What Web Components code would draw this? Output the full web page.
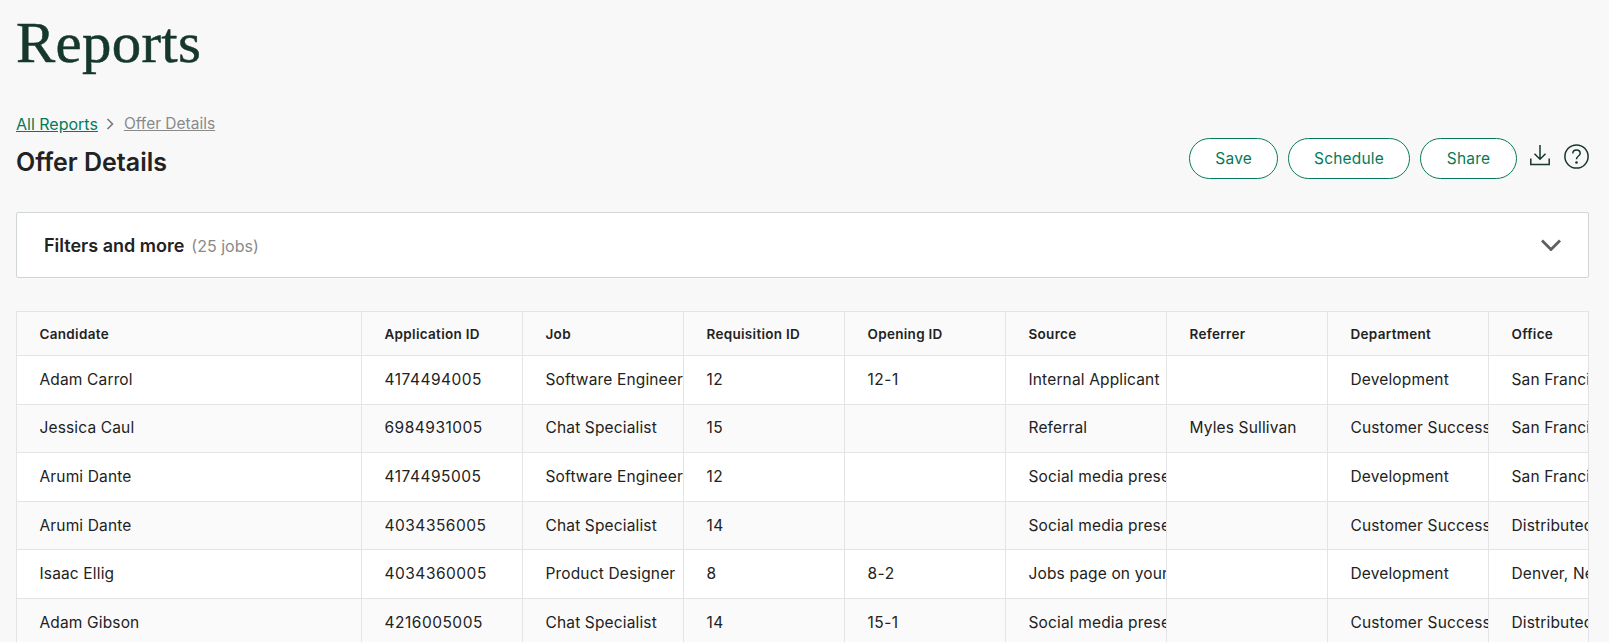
<!DOCTYPE html>
<html><head><meta charset="utf-8"><title>Reports</title>
<style>
html,body{margin:0;padding:0;background:#f8f8f8;overflow:hidden;height:642px}
body{font-family:Inter,"Liberation Sans",sans-serif;color:#222}
</style></head><body>
<report-page>
  <page-title slot="title">Reports</page-title>
  <report-bar slot="bar">
    <crumb-trail slot="crumbs" current="Offer Details"><a href="#">All Reports</a></crumb-trail>
    <span slot="name">Offer Details</span>
    <pill-button slot="actions">Save</pill-button>
    <pill-button slot="actions">Schedule</pill-button>
    <pill-button slot="actions" style="--pad:25.75px">Share</pill-button>
    <icon-download slot="actions"></icon-download>
    <icon-help slot="actions"></icon-help>
  </report-bar>
  <filter-panel slot="filters" note="(25 jobs)">Filters and more</filter-panel>
  <data-table slot="table"></data-table>
</report-page>
<script>
function shadow(el,html){el.attachShadow({mode:'open'}).innerHTML=html}
customElements.define('report-page',class extends HTMLElement{constructor(){super();shadow(this,`<style>
:host{display:flex;flex-direction:column;padding:0 20px 0 16px;height:642px;box-sizing:border-box;overflow:hidden}
.t{margin-top:13px}.b{margin-top:41px}.f{margin-top:35px}.d{margin-top:33px}
</style><div class="t"><slot name="title"></slot></div><div class="b"><slot name="bar"></slot></div><div class="f"><slot name="filters"></slot></div><div class="d"><slot name="table"></slot></div>`)}});
customElements.define('page-title',class extends HTMLElement{constructor(){super();shadow(this,`<style>
:host{display:block;font:400 56px/60px "Liberation Serif",serif;color:#15372c;letter-spacing:.3px;-webkit-text-stroke:.5px #15372c;transform:scaleX(1.05);transform-origin:0 50%}
</style><slot></slot>`)}});
customElements.define('report-bar',class extends HTMLElement{constructor(){super();shadow(this,`<style>
:host{display:flex;justify-content:space-between;align-items:flex-end}
.l{display:flex;flex-direction:column;gap:13px}
.n{font:600 25px/30px Inter,sans-serif;color:#222}
.r{display:flex;align-items:center;margin-bottom:-2px}
</style><div class="l"><slot name="crumbs"></slot><div class="n"><slot name="name"></slot></div></div><div class="r"><slot name="actions"></slot></div>`)}});
customElements.define('crumb-trail',class extends HTMLElement{constructor(){super();shadow(this,`<style>
:host{display:flex;align-items:center;font:400 16px/20px Inter,sans-serif}
::slotted(a){color:#047a5a;text-decoration:underline}
svg{margin:0 9px 0 8px;display:block}
.c{color:#8a8a8a;text-decoration:underline;font-size:15.5px}
</style><slot></slot><svg width="9" height="14" viewBox="0 0 9 14" fill="none" stroke="#7a7a7a" stroke-width="1.6"><path d="M1.5 2l5 5-5 5"/></svg><span class="c">${this.getAttribute('current')}</span>`)}});
customElements.define('pill-button',class extends HTMLElement{constructor(){super();shadow(this,`<style>
:host{display:block;margin-right:10px}
button{display:block;height:41px;padding:0 var(--pad,25px);border:1px solid #047a5a;border-radius:21px;background:#fff;color:#047a5a;font:400 15.5px/20px Inter,sans-serif;letter-spacing:.2px}
</style><button><slot></slot></button>`)}});
customElements.define('icon-download',class extends HTMLElement{constructor(){super();shadow(this,`<style>:host{display:block;margin:-7px 14px 0 3px}svg{display:block}</style>
<svg width="20" height="22" viewBox="0 0 20 22" fill="none" stroke="#15372c" stroke-width="1.5"><path d="M10 1v14M4.5 9.8L10 15.3l5.5-5.5M.8 14.5v6h18.4v-6"/></svg>`)}});
customElements.define('icon-help',class extends HTMLElement{constructor(){super();shadow(this,`<style>:host{display:block;margin-top:-5px}svg{display:block}</style>
<svg width="25" height="25" viewBox="0 0 25 25" fill="none" stroke="#15372c" stroke-width="1.5"><circle cx="12.5" cy="12.5" r="11.6"/><path d="M8.8 9.6c0-2.2 1.7-3.6 3.7-3.6s3.7 1.3 3.7 3.3c0 1.6-1 2.4-2.2 3.2-1 .7-1.5 1.3-1.5 2.7"/><circle cx="12.5" cy="18.5" r=".6" fill="#15372c"/></svg>`)}});
customElements.define('filter-panel',class extends HTMLElement{constructor(){super();shadow(this,`<style>
:host{display:flex;align-items:center;justify-content:space-between;height:66px;box-sizing:border-box;padding:0 27px;background:#fff;border:1px solid #cfd6d3;border-radius:2px}
.a{display:flex;align-items:baseline;gap:7px;padding-top:1px}
.m{font:600 18px/22px Inter,sans-serif;color:#222}
.n{font:400 16px/22px Inter,sans-serif;color:#8a8a8a}
svg{display:block}
</style><div class="a"><span class="m"><slot></slot></span><span class="n">${this.getAttribute('note')}</span></div>
<svg width="20" height="12" viewBox="0 0 20 12" fill="none" stroke="#5f5f5f" stroke-width="2.8"><path d="M1 1.5l9 9 9-9"/></svg>`)}});
const COLS=['Candidate','Application ID','Job','Requisition ID','Opening ID','Source','Referrer','Department','Office'];
const ROWS=[
['Adam Carrol','4174494005','Software Engineer','12','12-1','Internal Applicant','','Development','San Francisco'],
['Jessica Caul','6984931005','Chat Specialist','15','','Referral','Myles Sullivan','Customer Success','San Francisco'],
['Arumi Dante','4174495005','Software Engineer','12','','Social media presence','','Development','San Francisco'],
['Arumi Dante','4034356005','Chat Specialist','14','','Social media presence','','Customer Success','Distributed'],
['Isaac Ellig','4034360005','Product Designer','8','8-2','Jobs page on your website','','Development','Denver, New York'],
['Adam Gibson','4216005005','Chat Specialist','14','15-1','Social media presence','','Customer Success','Distributed']];
customElements.define('table-row',class extends HTMLElement{
 set cells(v){
  const head=this.hasAttribute('head');
  shadow(this,`<style>
:host{display:grid;grid-template-columns:345px repeat(8,161px);height:${head?44:48.6}px;box-sizing:border-box;border-bottom:1px solid #e4e4e4;background:${this.hasAttribute('alt')||head?'#fafafa':'#fff'}}
div{box-sizing:border-box;border-right:1px solid #e4e4e4;padding-left:22.5px;display:flex;align-items:center;overflow:hidden;white-space:nowrap;font:${head?'600 13.5px':'400 15.5px'}/20px Inter,sans-serif;letter-spacing:${head?.3:.15}px;color:#222}
div:first-child{padding-left:22px}
.num{letter-spacing:.5px}
</style>`+v.map(c=>`<div${/^\d+(-\d+)?$/.test(c)&&!head?' class="num"':''}>${c}</div>`).join(''));
 }});
customElements.define('data-table',class extends HTMLElement{constructor(){super();shadow(this,`<style>
:host{display:block;overflow:hidden;border:1px solid #e4e4e4;border-bottom:0;height:340px;box-sizing:border-box}
</style><slot></slot>`);
 [COLS,...ROWS].forEach((r,i)=>{const e=document.createElement('table-row');if(i==0)e.setAttribute('head','');if(i&&i%2==0)e.setAttribute('alt','');this.appendChild(e);e.cells=r;});
}});
</script>
</body></html>
